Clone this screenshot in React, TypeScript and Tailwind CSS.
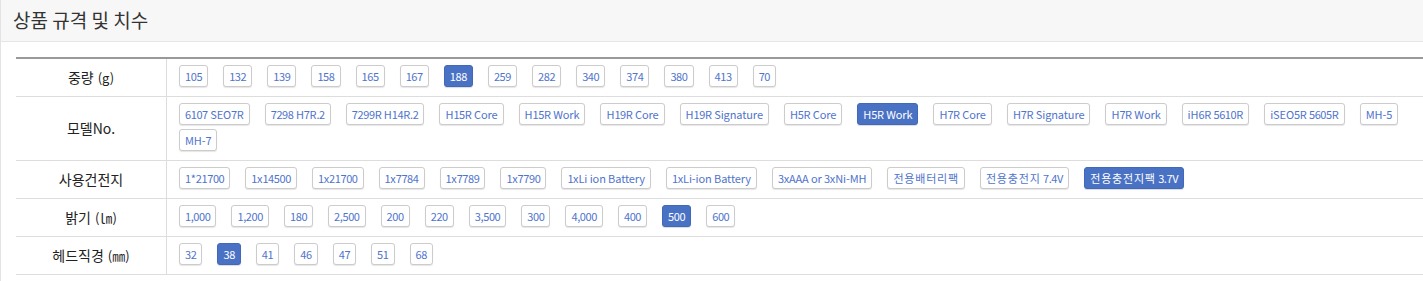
type Spec = {
  label: string
  unit?: string
  options: string[]
  active: string
}

const specs: Spec[] = [
  {
    label: "중량",
    unit: "(g)",
    options: ["105", "132", "139", "158", "165", "167", "188", "259", "282", "340", "374", "380", "413", "70"],
    active: "188",
  },
  {
    label: "모델No.",
    options: [
      "6107 SEO7R",
      "7298 H7R.2",
      "7299R H14R.2",
      "H15R Core",
      "H15R Work",
      "H19R Core",
      "H19R Signature",
      "H5R Core",
      "H5R Work",
      "H7R Core",
      "H7R Signature",
      "H7R Work",
      "iH6R 5610R",
      "iSEO5R 5605R",
      "MH-5",
      "MH-7",
    ],
    active: "H5R Work",
  },
  {
    label: "사용건전지",
    options: [
      "1*21700",
      "1x14500",
      "1x21700",
      "1x7784",
      "1x7789",
      "1x7790",
      "1xLi ion Battery",
      "1xLi-ion Battery",
      "3xAAA or 3xNi-MH",
      "전용배터리팩",
      "전용충전지 7.4V",
      "전용충전지팩 3.7V",
    ],
    active: "전용충전지팩 3.7V",
  },
  {
    label: "밝기",
    unit: "(㏐)",
    options: ["1,000", "1,200", "180", "2,500", "200", "220", "3,500", "300", "4,000", "400", "500", "600"],
    active: "500",
  },
  {
    label: "헤드직경",
    unit: "(㎜)",
    options: ["32", "38", "41", "46", "47", "51", "68"],
    active: "38",
  },
]

// the original font has narrower digits and wider hangul, so runs get their own spacing
const OptionText = ({ text }: { text: string }) => {
  const parts = text.split(/([\uac00-\ud7a3]+|[0-9.,]+)/).filter(Boolean)
  return (
    <>
      {parts.map((p, i) => {
        if (/[\uac00-\ud7a3]/.test(p)) {
          return (
            <span key={i} className="tracking-[0.8px]">
              {p}
            </span>
          )
        }
        if (/^[0-9.,]+$/.test(p)) {
          return (
            <span key={i} className="tracking-[-0.4px]">
              {p}
            </span>
          )
        }
        return (
          <span key={i} className="tracking-[-0.1px]">
            {p}
          </span>
        )
      })}
    </>
  )
}

const OptionButton = ({ text, active }: { text: string; active: boolean }) => (
  <button
    type="button"
    className={
      active
        ? "mr-[15px] mb-[4px] h-[22px] rounded-[3px] border border-[#4169b8] bg-[#4a72c4] px-[5px] text-[11px] leading-[20px] whitespace-nowrap text-white shadow-[0_1px_1px_rgba(0,0,0,0.15)]"
        : "mr-[15px] mb-[4px] h-[22px] rounded-[3px] border border-[#cccccc] bg-white px-[5px] text-[11px] leading-[20px] whitespace-nowrap text-[#4f74cc] shadow-[0_1px_1px_rgba(0,0,0,0.1)]"
    }
  >
    <OptionText text={text} />
  </button>
)

export default function App() {
  return (
    <div className="w-full overflow-hidden bg-white font-['Noto_Sans_CJK_KR','Noto_Sans',sans-serif]">
      <div className="w-[1470px] border-l border-[#e3e3e3] bg-white pb-[6px]">
        <div className="flex h-[42px] items-center border-b border-[#e6e6e6] bg-[#f7f7f7] pl-[12px]">
          <h2 className="text-[19px] text-[#333333]">상품 규격 및 치수</h2>
        </div>

        <div className="mx-[15px] mt-[15px] border-t-2 border-[#999999]">
          {specs.map((spec, i) => (
            <div key={i} className="flex border-b border-[#dddddd]">
              <div className="flex w-[151px] shrink-0 items-center justify-center gap-[4px] border-r border-[#dddddd] text-[14px] text-[#222222]">
                <span>{spec.label}</span>
                {spec.unit && <span className="text-[13px]">{spec.unit}</span>}
              </div>
              <div className="flex flex-1 flex-wrap pt-[6px] pb-[5px] pl-[12px] pr-[12px]">
                {spec.options.map((opt) => (
                  <OptionButton key={opt} text={opt} active={opt === spec.active} />
                ))}
              </div>
            </div>
          ))}
        </div>
      </div>
    </div>
  )
}
